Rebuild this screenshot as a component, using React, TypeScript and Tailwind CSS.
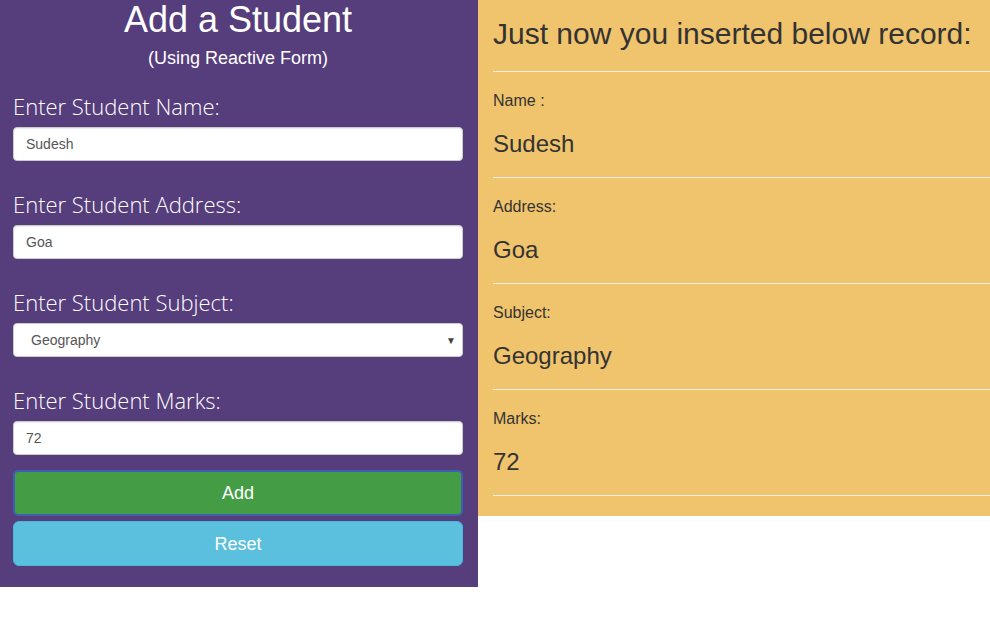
import React from "react";

const rows = [
  { label: "Name :", value: "Sudesh" },
  { label: "Address:", value: "Goa" },
  { label: "Subject:", value: "Geography" },
  { label: "Marks:", value: "72" },
];

function Label({ children }: { children: React.ReactNode }) {
  return (
    <div
      className="h-[34px] leading-[34px] text-[22px] font-light text-white whitespace-nowrap"
      style={{ fontFamily: '"Open Sans", sans-serif' }}
    >
      {children}
    </div>
  );
}

function TextInput({ value }: { value: string }) {
  return (
    <div className="mt-[4px] h-[34px] rounded-[4px] border border-[#ccc] bg-white pl-[12px] flex items-center text-[14px] text-[#555] shadow-[inset_0_1px_1px_rgba(0,0,0,0.075)]">
      {value}
    </div>
  );
}

export default function App() {
  return (
    <div
      className="flex items-start w-[990px] overflow-hidden bg-white"
      style={{ fontFamily: '"Liberation Sans", Arial, sans-serif' }}
    >
      <div className="w-[478px] shrink-0 bg-[#563d7c] pl-[13px] pr-[15px] pb-[21px]">
        <div className="h-[40px] leading-[40px] text-[36px] text-white text-center">Add a Student</div>
        <div className="mt-[8px] h-[20px] leading-[20px] text-[18px] text-white text-center">(Using Reactive Form)</div>
        <div className="mt-[21px]">
          <Label>Enter Student Name:</Label>
          <TextInput value="Sudesh" />
        </div>
        <div className="mt-[26px]">
          <Label>Enter Student Address:</Label>
          <TextInput value="Goa" />
        </div>
        <div className="mt-[26px]">
          <Label>Enter Student Subject:</Label>
          <div className="mt-[4px] h-[34px] rounded-[4px] border border-[#ccc] bg-white pl-[17px] pr-[6px] flex items-center justify-between text-[14px] text-[#555]">
            <span>Geography</span>
            <span className="text-[10px] text-[#444]">▼</span>
          </div>
        </div>
        <div className="mt-[26px]">
          <Label>Enter Student Marks:</Label>
          <TextInput value="72" />
        </div>
        <div className="mt-[15px] h-[46px] rounded-[5px] border-2 border-[#3d5fb4] bg-[#449d44] flex items-center justify-center text-[18px] text-white">
          Add
        </div>
        <div className="mt-[5px] h-[45px] rounded-[6px] border border-[#46b8da] bg-[#5bc0de] flex items-center justify-center text-[18px] text-white pt-[2px]">
          Reset
        </div>
      </div>
      <div className="flex-1 min-w-0 bg-[#f0c36d] pl-[15px] pt-[17px] pb-[20px] text-[#333]">
        <div className="h-[33px] leading-[33px] text-[30px] whitespace-nowrap">Just now you inserted below record:</div>
        <div className="mt-[21px] h-px bg-[#f6efe0]" />
        {rows.map((r) => (
          <div key={r.label}>
            <div className="pt-[18px] h-[40px] leading-[22px] text-[16px]">{r.label}</div>
            <div className="mt-[19px] h-[26px] leading-[26px] text-[24px]">{r.value}</div>
            <div className="mt-[20px] h-px bg-[#f6efe0]" />
          </div>
        ))}
      </div>
    </div>
  );
}
